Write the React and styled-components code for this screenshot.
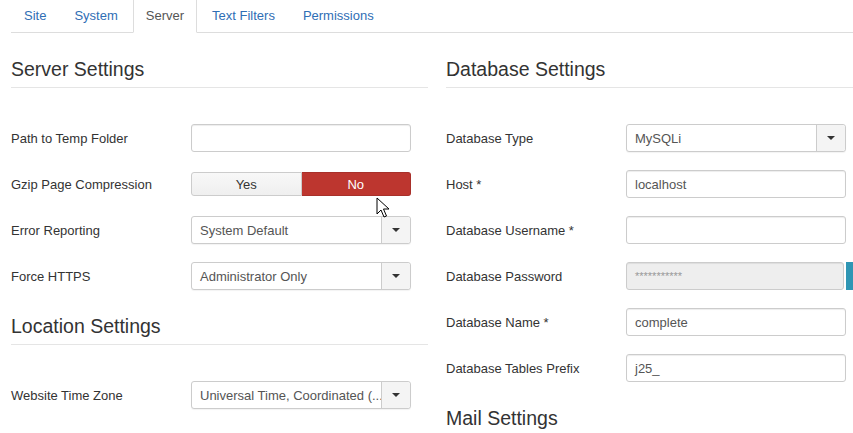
import React from 'react';
import styled, { createGlobalStyle } from 'styled-components';

const GlobalStyle = createGlobalStyle`
  html, body {
    margin: 0;
    padding: 0;
    background: #fff;
  }
  body {
    font-family: "Liberation Sans", Arial, sans-serif;
    font-size: 13px;
    color: #333;
  }
`;

const Page = styled.div`
  position: relative;
  width: 853px;
  height: 433px;
  overflow: hidden;
`;

const Tabs = styled.ul`
  display: flex;
  list-style: none;
  margin: 0 0 18px 11px;
  padding: 0;
  height: 32px;
  border-bottom: 1px solid #ddd;
`;

const Tab = styled.li`
  margin-right: 2px;
  margin-bottom: -1px;
  padding: 0 12px;
  height: 32px;
  line-height: 31px;
  border: 1px solid ${(p) => (p.$active ? '#ddd' : 'transparent')};
  border-top: none;
  border-bottom-color: ${(p) => (p.$active ? '#fff' : 'transparent')};
  background: ${(p) => (p.$active ? '#fff' : 'transparent')};
  color: ${(p) => (p.$active ? '#555' : '#2f6eb5')};
  font-size: 13px;
  cursor: pointer;
`;

const Columns = styled.div`
  display: grid;
  grid-template-columns: 417px 417px;
  column-gap: 18px;
  padding-left: 11px;
`;

const Column = styled.div`
  display: flex;
  flex-direction: column;
`;

const Legend = styled.div`
  font-size: 19.5px;
  line-height: 36px;
  color: #333;
  border-bottom: 1px solid #e5e5e5;
  margin-bottom: 36px;
`;

const Row = styled.div`
  display: flex;
  align-items: center;
  height: 28px;
  margin-bottom: 18px;
`;

const Label = styled.label`
  width: 180px;
  flex: none;
  color: #333;
  font-size: 13px;
`;

const Control = styled.div`
  width: 220px;
  flex: none;
  display: flex;
  align-items: center;
`;

const TextInput = styled.div`
  box-sizing: border-box;
  width: ${(p) => p.$width || '100%'};
  flex: none;
  height: 28px;
  line-height: 27px;
  padding: 0 8px;
  border: 1px solid #ccc;
  border-radius: 3px;
  background: ${(p) => (p.$disabled ? '#eee' : '#fff')};
  box-shadow: inset 0 1px 1px rgba(0, 0, 0, 0.075);
  color: ${(p) => (p.$disabled ? '#999' : '#555')};
  font-size: ${(p) => (p.$disabled ? '11px' : '13px')};
  white-space: nowrap;
  overflow: hidden;
`;

const Select = styled.div`
  box-sizing: border-box;
  width: 100%;
  height: 28px;
  display: flex;
  border: 1px solid #ccc;
  border-radius: 3px;
  background: #fff;
  box-shadow: 0 1px 1px rgba(0, 0, 0, 0.05);
`;

const SelectValue = styled.span`
  flex: 1;
  min-width: 0;
  padding: 0 8px;
  line-height: 27px;
  color: #555;
  white-space: nowrap;
`;

const Arrow = styled.span`
  width: 28px;
  flex: none;
  display: flex;
  align-items: center;
  justify-content: center;
  border-left: 1px solid #ccc;
  background: #f4f4f4;
  border-radius: 0 3px 3px 0;

  &::after {
    content: '';
    border-left: 4px solid transparent;
    border-right: 4px solid transparent;
    border-top: 4px solid #333;
  }
`;

const Toggle = styled.div`
  width: 100%;
  height: 24px;
  display: flex;
`;

const ToggleButton = styled.span`
  flex: 1;
  display: flex;
  align-items: center;
  justify-content: center;
  font-size: 13px;
  border: 1px solid ${(p) => (p.$on ? '#a8302a' : '#ccc')};
  background: ${(p) =>
    p.$on ? '#bd362f' : 'linear-gradient(#f8f8f8, #efefef)'};
  color: ${(p) => (p.$on ? '#fff' : '#333')};
  border-radius: ${(p) => (p.$first ? '3px 0 0 3px' : '0 3px 3px 0')};
  ${(p) => (p.$first ? '' : 'border-left: none;')}
`;

const PasswordWrap = styled.div`
  display: flex;
  gap: 2px;
`;

const InfoButton = styled.span`
  width: 30px;
  flex: none;
  height: 28px;
  background: #2f96b4;
  border-radius: 0 3px 3px 0;
`;

const Cursor = styled.svg`
  position: absolute;
  left: 376px;
  top: 197px;
  pointer-events: none;
`;

const SelectField = ({ value }) => (
  <Select>
    <SelectValue>{value}</SelectValue>
    <Arrow />
  </Select>
);

const Field = ({ label, children }) => (
  <Row>
    <Label>{label}</Label>
    <Control>{children}</Control>
  </Row>
);

const App = () => {
  const tabs = ['Site', 'System', 'Server', 'Text Filters', 'Permissions'];
  return (
    <Page>
      <GlobalStyle />
      <Tabs>
        {tabs.map((t) => (
          <Tab key={t} $active={t === 'Server'}>
            {t}
          </Tab>
        ))}
      </Tabs>
      <Columns>
        <Column>
          <Legend>Server Settings</Legend>
          <Field label="Path to Temp Folder">
            <TextInput />
          </Field>
          <Field label="Gzip Page Compression">
            <Toggle>
              <ToggleButton $first>Yes</ToggleButton>
              <ToggleButton $on>No</ToggleButton>
            </Toggle>
          </Field>
          <Field label="Error Reporting">
            <SelectField value="System Default" />
          </Field>
          <Field label="Force HTTPS">
            <SelectField value="Administrator Only" />
          </Field>
          <Legend>Location Settings</Legend>
          <Field label="Website Time Zone">
            <SelectField value="Universal Time, Coordinated (..." />
          </Field>
        </Column>
        <Column>
          <Legend>Database Settings</Legend>
          <Field label="Database Type">
            <SelectField value="MySQLi" />
          </Field>
          <Field label="Host *">
            <TextInput>localhost</TextInput>
          </Field>
          <Field label="Database Username *">
            <TextInput />
          </Field>
          <Field label="Database Password">
            <PasswordWrap>
              <TextInput $disabled $width="218px">
                ***********
              </TextInput>
              <InfoButton />
            </PasswordWrap>
          </Field>
          <Field label="Database Name *">
            <TextInput>complete</TextInput>
          </Field>
          <Field label="Database Tables Prefix">
            <TextInput>j25_</TextInput>
          </Field>
          <Legend>Mail Settings</Legend>
        </Column>
      </Columns>
      <Cursor width="14" height="22" viewBox="0 0 14 22">
        <path
          d="M1 1 L1 17 L5 13 L8 20 L10.5 19 L7.5 12 L13 12 Z"
          fill="#fff"
          stroke="#000"
          strokeWidth="1"
          strokeLinejoin="round"
        />
      </Cursor>
    </Page>
  );
};

export default App;
